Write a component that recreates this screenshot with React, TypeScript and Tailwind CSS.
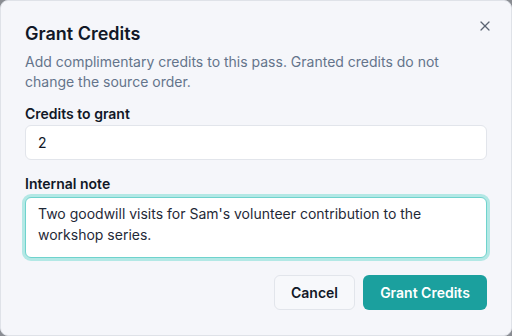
export default function App() {
  return (
    <div className="w-[512px] h-[336px] bg-[#8a8d93]" style={{ fontFamily: "Inter, 'Noto Sans', sans-serif" }}>
      <div className="relative w-full h-full rounded-lg border border-[#dfe2e8] bg-[#f5f6fa] px-6 pt-[19px]">
        <button className="absolute right-[20px] top-[19px] text-[#5b6473]">
          <svg width="12" height="12" viewBox="0 0 24 24" fill="none" stroke="currentColor" strokeWidth="2.4" strokeLinecap="round">
            <path d="M20 4 4 20" />
            <path d="m4 4 16 16" />
          </svg>
        </button>
        <h2 className="text-lg leading-7 font-semibold text-[#111827]">Grant Credits</h2>
        <p className="mt-1 text-[14px] leading-5 text-[#64748b]">
          Add complimentary credits to this pass. Granted credits do not change the source order.
        </p>
        <label className="mt-3 block text-sm leading-5 font-semibold text-[#111827]">Credits to grant</label>
        <div className="mt-[1px] h-[35px] rounded-md border border-[#e2e5eb] bg-white px-3 flex items-center text-sm text-[#111827]">
          2
        </div>
        <label className="mt-[14px] block text-sm leading-5 font-semibold text-[#111827]">Internal note</label>
        <div className="mt-[3px] h-[61px] rounded-md border border-[#6fd3cd] bg-white px-3 pt-[5px] text-sm leading-[21px] text-[#1f2937] ring-[3px] ring-[#b3e8e5]">
          Two goodwill visits for Sam's volunteer contribution to the workshop series.
        </div>
        <div className="mt-[17px] flex justify-end gap-2">
          <button className="h-[35px] w-[81px] rounded-md border border-[#e2e5eb] bg-[#f7f8fb] text-sm font-semibold text-[#111827]">
            Cancel
          </button>
          <button className="h-[35px] w-[124px] rounded-md bg-[#1ba09e] text-sm font-semibold text-white">
            Grant Credits
          </button>
        </div>
      </div>
    </div>
  );
}
